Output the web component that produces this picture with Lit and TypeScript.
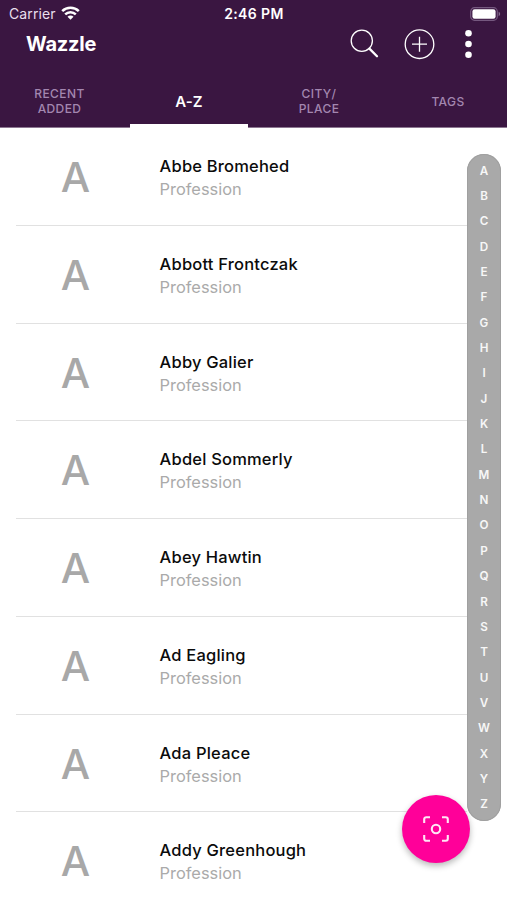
import { LitElement, html, css } from "lit";
import { customElement, property } from "lit/decorators.js";
import { classMap } from "lit/directives/class-map.js";

const CONTACTS = [
  "Abbe Bromehed",
  "Abbott Frontczak",
  "Abby Galier",
  "Abdel Sommerly",
  "Abey Hawtin",
  "Ad Eagling",
  "Ada Pleace",
  "Addy Greenhough",
];

const TABS = [
  { lines: ["RECENT", "ADDED"], active: false },
  { lines: ["A-Z"], active: true },
  { lines: ["CITY/", "PLACE"], active: false },
  { lines: ["TAGS"], active: false },
];

const LETTERS = "ABCDEFGHIJKLMNOPQRSTUVWXYZ".split("");

@customElement("status-bar")
class StatusBar extends LitElement {
  static styles = css`
    :host {
      display: grid;
      grid-template-columns: 1fr auto 1fr;
      align-items: center;
      height: 27px;
      padding: 0 6px 0 9px;
      color: #fff;
      font-size: 14px;
    }
    .carrier {
      display: flex;
      align-items: center;
      gap: 5.5px;
      color: #e9dfed;
      letter-spacing: 0.12px;
    }
    .time {
      font-weight: 600;
      font-size: 14px;
      letter-spacing: 0.4px;
      margin-right: 2px;
    }
    .battery {
      justify-self: end;
    }
    svg {
      display: block;
    }
    .wifi {
      margin-top: -2px;
    }
  `;
  render() {
    return html`
      <div class="carrier">
        <span>Carrier</span>
        <svg class="wifi" width="19" height="14" viewBox="0 0 19 14" fill="none" stroke="#fff" stroke-width="2.5">
          <path d="M1.2 5.2a11.8 11.8 0 0 1 16.6 0" />
          <path d="M4.2 8.4a7.5 7.5 0 0 1 10.6 0" />
          <path d="M9.5 13.8 6.5 10.8a4.2 4.2 0 0 1 6 0z" fill="#fff" stroke="none" />
        </svg>
      </div>
      <div class="time">2:46 PM</div>
      <svg class="battery" width="31" height="14" viewBox="0 0 31 14">
        <rect x="0.7" y="0.7" width="26.6" height="12.6" rx="3.8" fill="none" stroke="#75587f" stroke-width="1.2" />
        <rect x="2.4" y="2.3" width="23.2" height="9.4" rx="2.2" fill="#fff" />
        <path d="M28.6 4.8c2 .7 2 3.7 0 4.4z" fill="#866c90" />
      </svg>
    `;
  }
}

@customElement("title-bar")
class TitleBar extends LitElement {
  static styles = css`
    :host {
      display: flex;
      align-items: center;
      justify-content: space-between;
      height: 34px;
      padding: 0 35.5px 0 26px;
      color: #fff;
    }
    .title {
      font-size: 20px;
      font-weight: 700;
      letter-spacing: -0.2px;
    }
    .actions {
      display: flex;
      align-items: center;
    }
    .search {
      margin-right: 24.5px;
    }
    .add {
      margin-right: 30px;
    }
    svg {
      display: block;
    }
  `;
  render() {
    return html`
      <div class="title">Wazzle</div>
      <div class="actions">
        <svg class="search" width="29" height="30" viewBox="0 0 29 30" fill="none" stroke="#fff" stroke-linecap="round">
          <circle cx="11.8" cy="11.8" r="10.6" stroke-width="1.3" />
          <path d="M19.4 19.6 27 27.3" stroke-width="2.3" />
        </svg>
        <svg class="add" width="31" height="31" viewBox="0 0 31 31" fill="none" stroke="#fff" stroke-width="1.3">
          <circle cx="15.5" cy="15.2" r="14.3" />
          <path d="M15.5 7.7v15M8 15.2h15" />
        </svg>
        <svg width="7" height="30" viewBox="0 0 7 30" fill="#fff">
          <circle cx="3.5" cy="4.3" r="3.3" />
          <circle cx="3.5" cy="15" r="3.3" />
          <circle cx="3.5" cy="25.7" r="3.3" />
        </svg>
      </div>
    `;
  }
}

@customElement("tab-bar")
class TabBar extends LitElement {
  static styles = css`
    :host {
      display: grid;
      grid-template-columns: 119px 11px 118px 12px 118px 11px 118px;
      height: 67px;
    }
    .tab {
      display: flex;
      flex-direction: column;
      align-items: center;
      justify-content: center;
      color: #a387b0;
      font-size: 12px;
      font-weight: 500;
      line-height: 15px;
      letter-spacing: 0.4px;
      box-sizing: border-box;
      border-bottom: 4px solid transparent;
      padding: 17px 0 0;
    }
    .tab:nth-child(2) {
      grid-column: 3;
    }
    .tab:nth-child(3) {
      grid-column: 5;
    }
    .tab:nth-child(4) {
      grid-column: 7;
    }
    .tab.active {
      color: #fff;
      border-bottom-color: #fff;
      font-size: 15px;
      font-weight: 600;
      letter-spacing: 0.1px;
    }
  `;
  render() {
    return TABS.map(
      (tab) => html`
        <div class=${classMap({ tab: true, active: tab.active })}>
          ${tab.lines.map((line) => html`<span>${line}</span>`)}
        </div>
      `
    );
  }
}

@customElement("contact-row")
class ContactRow extends LitElement {
  @property() name = "";

  static styles = css`
    :host {
      display: grid;
      grid-template-columns: 118px 1fr;
      column-gap: 25.6px;
      height: 97.75px;
      margin: 0 40px 0 16px;
      box-sizing: border-box;
      border-bottom: 1px solid #e1e1e1;
    }
    .avatar {
      text-align: center;
      font-size: 41.5px;
      font-weight: 500;
      line-height: 50px;
      letter-spacing: -1px;
      color: #a8a8a8;
      padding-top: 24.2px;
    }
    .details {
      padding-top: 27.1px;
      white-space: nowrap;
    }
    .name {
      font-size: 16.5px;
      font-weight: 500;
      line-height: 23px;
      letter-spacing: 0.2px;
      color: #0b0b0b;
    }
    .role {
      font-size: 16.4px;
      line-height: 23px;
      letter-spacing: 0;
      color: #aaa;
    }
  `;
  render() {
    return html`
      <div class="avatar">${this.name.charAt(0)}</div>
      <div class="details">
        <div class="name">${this.name}</div>
        <div class="role">Profession</div>
      </div>
    `;
  }
}

@customElement("letter-index")
class LetterIndex extends LitElement {
  static styles = css`
    :host {
      display: flex;
      flex-direction: column;
      width: 34px;
      height: 667px;
      padding: 4.5px 0 3.5px;
      box-sizing: border-box;
      border-radius: 17px;
      background: #a9a9a9;
      box-shadow: inset 0 0 0 1px #a0a0a0;
    }
    .letter {
      flex: 1;
      display: flex;
      align-items: center;
      justify-content: center;
      color: #f7f7f7;
      font-size: 11.7px;
      font-weight: 600;
      line-height: 14px;
    }
  `;
  render() {
    return LETTERS.map((l) => html`<div class="letter">${l}</div>`);
  }
}

@customElement("app-root")
class AppRoot extends LitElement {
  static styles = css`
    :host {
      display: flex;
      flex-direction: column;
      position: relative;
      height: 900px;
      overflow: hidden;
      background: #fff;
      font-family: Inter, "Liberation Sans", sans-serif;
    }
    .header {
      flex: none;
      height: 128px;
      background: linear-gradient(#3a1641 127px, #8c7791 127px);
    }
    .list {
      flex: 1;
      min-height: 0;
      overflow: hidden;
    }
    .index {
      position: absolute;
      top: 153.5px;
      right: 6px;
    }
    .scan {
      position: absolute;
      left: 402px;
      top: 795px;
      width: 68px;
      height: 68px;
      padding: 0;
      border: 0;
      border-radius: 50%;
      display: flex;
      align-items: center;
      justify-content: center;
      background: #ff0099;
      box-shadow: 0 3px 6px rgba(0, 0, 0, 0.28);
    }
  `;
  render() {
    return html`
      <div class="header">
        <status-bar></status-bar>
        <title-bar></title-bar>
        <tab-bar></tab-bar>
      </div>
      <div class="list">
        ${CONTACTS.map((name) => html`<contact-row .name=${name}></contact-row>`)}
      </div>
      <letter-index class="index"></letter-index>
      <button class="scan" aria-label="Scan">
        <svg width="26" height="26" viewBox="0 0 26 26" fill="none" stroke="#ffe6f5" stroke-width="2.1">
          <path d="M1.2 7V3.2a2 2 0 0 1 2-2H7M19 1.2h3.8a2 2 0 0 1 2 2V7M24.8 19v3.8a2 2 0 0 1-2 2H19M7 24.8H3.2a2 2 0 0 1-2-2V19" />
          <circle cx="13" cy="13" r="4.2" />
        </svg>
      </button>
    `;
  }
}
